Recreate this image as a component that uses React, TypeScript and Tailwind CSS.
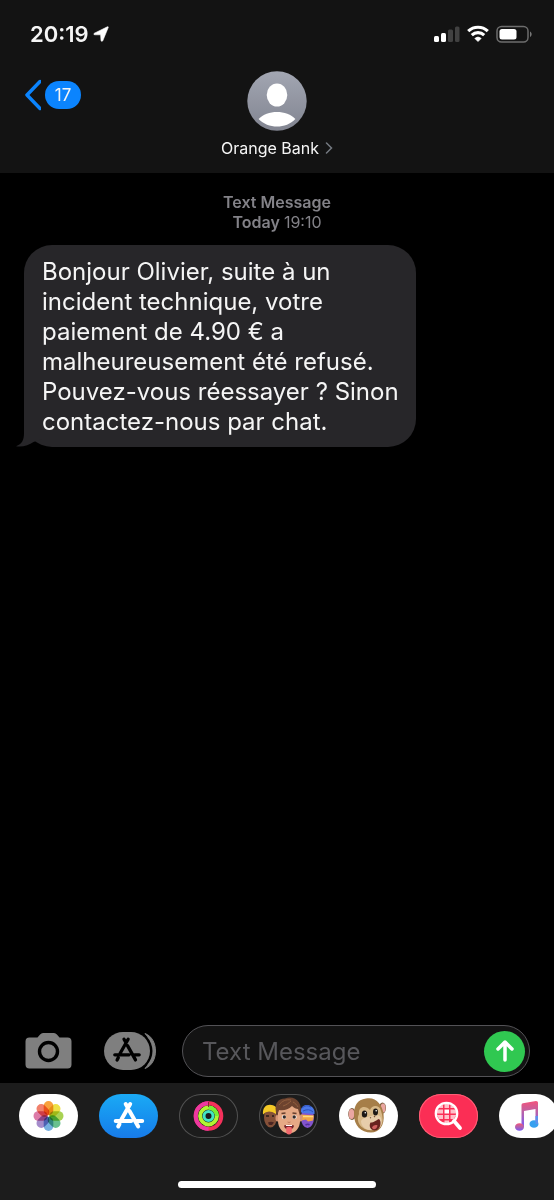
import React from 'react';

function StatusBar() {
  return (
    <div className="flex h-[68px] items-center justify-between pl-[30px] pr-[21px]">
      <div className="flex items-center gap-1">
        <span className="text-[22px] leading-7 font-semibold">20:19</span>
        <svg className="h-4 w-4" viewBox="0 0 16 16" aria-hidden="true">
          <path d="M1.400 7.200 14.400.8c.7-.3 1.100.1.8.8L9.800 14.700c-.5 1-1.700.7-1.800-.3L7.600 8.800 1.900 8.800C.7 8.700.4 7.700 1.400 7.200Z" fill="white" stroke="white" strokeWidth=".6" />
        </svg>
      </div>
      <svg className="h-[18px] w-[100px]" viewBox="0 0 100 18" aria-hidden="true">
        <g fill="white">
          <rect x="1" y="11" width="5" height="6" rx="1.500" />
          <rect x="8" y="8" width="5" height="9" rx="1.500" />
          <g fill="#414141">
            <rect x="15" y="4.500" width="5" height="12.500" rx="1.500" />
            <rect x="22" y="1.500" width="4.500" height="15.500" rx="1.500" />
          </g>
          <path d="M45 16.600 41.800 13.400a4.700 4.700 0 0 1 6.400 0Z" stroke="white" strokeWidth=".6" strokeLinejoin="round" />
        </g>
        <path d="M35.200 6.200a14.200 14.200 0 0 1 19.600 0M38.800 10.100a9 9 0 0 1 12.400 0" fill="none" stroke="white" strokeWidth="3.100" />
        <rect x="64" y="1.500" width="31" height="15.500" rx="4.500" fill="none" stroke="#6d6d6d" strokeWidth="1.500" />
        <rect x="66.500" y="4" width="17" height="10.500" rx="2.500" fill="white" />
        <path d="M97 6.500c2.200 1 2.200 4.500 0 5.500Z" fill="#777" />
      </svg>
    </div>
  );
}

function Avatar() {
  return (
    <svg className="h-[60px] w-[60px]" viewBox="0 0 60 60" aria-hidden="true">
      <defs>
        <linearGradient id="avatar-bg" x1="0" y1="0" x2="0" y2="1">
          <stop stopColor="#a2a6b2" />
          <stop offset="1" stopColor="#828591" />
        </linearGradient>
      </defs>
      <circle cx="30" cy="30" r="29.700" fill="url(#avatar-bg)" />
      <ellipse cx="30" cy="24" rx="10.300" ry="11.500" fill="white" />
      <path d="M11.600 48C20 38.500 40 38.500 48.400 48 39 58 21 58 11.600 48Z" fill="white" />
    </svg>
  );
}

function Header() {
  return (
    <header className="bg-[#131313] pb-[13px]">
      <StatusBar />
      <div className="grid grid-cols-[1fr_auto_1fr] items-start pt-[3px]">
        <button className="mt-2 ml-6 flex w-fit items-center gap-1" aria-label="Back, 17 unread">
          <svg className="h-8 w-[17px]" viewBox="0 0 17 32" aria-hidden="true">
            <path d="M16 2.500 3 16l13 13.500" fill="none" stroke="#0b84fe" strokeWidth="3.500" strokeLinecap="round" strokeLinejoin="round" />
          </svg>
          <span className="flex h-7 w-9 items-center justify-center rounded-full bg-[#0b84fe] text-[17px] leading-6">17</span>
        </button>
        <button className="flex flex-col items-center gap-[5px]">
          <Avatar />
          <span className="flex items-center gap-[6px] text-base leading-6">
            Orange Bank
            <svg className="h-3 w-2" viewBox="0 0 8 12" aria-hidden="true">
              <path d="m1.500 1 5 5-5 5" fill="none" stroke="#747981" strokeWidth="1.500" strokeLinecap="round" />
            </svg>
          </span>
        </button>
      </div>
    </header>
  );
}

function Conversation() {
  return (
    <main className="grow pt-[19px]">
      <p className="text-center text-[16px] leading-5 font-semibold text-[#838288]">
        <span className="block">Text Message</span>
        <span className="block">Today <span className="font-normal">19:10</span></span>
      </p>
      <div className="relative mt-[13px] ml-6 w-[392px] max-w-[90%] rounded-[28px] bg-[#272629] pt-3 pr-4 pb-[10px] pl-[18px] text-2xl leading-[30px]">
        <svg className="absolute bottom-0 -left-2 h-8 w-8" viewBox="0 0 32 32" aria-hidden="true">
          <path d="M8 0v18c0 7-2 11-8 13.300 7 1 13-1.300 17.500-4.300L26 24V0Z" fill="#272629" />
        </svg>
        <p className="relative">
          Bonjour Olivier, suite à un incident technique, votre paiement de 4.90 € a malheureusement été refusé. Pouvez-vous réessayer ? Sinon contactez-nous par chat.
        </p>
      </div>
    </main>
  );
}

function StoreMark() {
  return (
    <g fill="none" strokeLinecap="round">
      <path d="M12.500 3.500 14.200 6.500M17 3.500 8.200 19M16.300 10.500 25 26M2.500 20.500H18M24 20.500H29M6.300 23.500 5 26" />
    </g>
  );
}

function Composer() {
  return (
    <div className="flex items-center pt-3 pr-6 pb-[6px] pl-[25px]">
      <button aria-label="Camera">
        <svg className="h-9 w-[47px]" viewBox="0 0 47 36" aria-hidden="true">
          <path d="M4.500 4.500h8l2.600-3Q16.300 0 18 0h11q1.700 0 2.900 1.500l2.600 3h8Q46.500 4.500 46.500 8.500V31.500Q46.500 35.500 42.500 35.500H4.500Q.5 35.500.5 31.500V8.500Q.5 4.500 4.500 4.500Z" fill="#7f7f7f" />
          <circle cx="23.500" cy="18.500" r="9" fill="#7f7f7f" stroke="black" strokeWidth="3.400" />
        </svg>
      </button>
      <button className="ml-8" aria-label="Apps">
        <svg className="h-[38px] w-[52px]" viewBox="0 0 52 38" aria-hidden="true">
          <path d="M41 1.500c14 5 14 30 0 35 8-8 8-27 0-35Z" fill="#7f7f7f" stroke="#7f7f7f" />
          <rect x="-1.500" y="-1.500" width="50" height="41" rx="20.500" fill="black" />
          <rect width="46" height="38" rx="19" fill="#7f7f7f" />
          <g transform="translate(8.500 4) scale(.92)" stroke="black" strokeWidth="3.600"><StoreMark /></g>
        </svg>
      </button>
      <div className="ml-[26px] flex h-[52px] min-w-0 grow items-center rounded-full border border-[#535256] bg-[#131313] pr-1 pl-[19px]">
        <input className="min-w-0 grow bg-transparent pt-[2px] text-2xl leading-8 text-white outline-none placeholder:text-[#57575b]" aria-label="Text Message" placeholder="Text Message" />
        <button className="flex h-[41px] w-[41px] shrink-0 items-center justify-center rounded-full bg-[#30c851]" aria-label="Send">
          <svg className="h-6 w-5" viewBox="0 0 20 24" aria-hidden="true">
            <path d="M10 21V3M3 10 10 3 17 10" fill="none" stroke="white" strokeWidth="3.500" strokeLinecap="round" strokeLinejoin="round" />
          </svg>
        </button>
      </div>
    </div>
  );
}

const petals = ['#f8a13c', '#eee045', '#a9d253', '#68c08e', '#76afe0', '#a58ccb', '#dc7ba8', '#f1806c'];

function PhotosIcon() {
  return (
    <g style={{ isolation: 'isolate' }}>
      {petals.map((color, i) => (
        <rect key={color} x="24.700" y="7" width="9.600" height="14.200" rx="4.800" fill={color} transform={`rotate(${i * 45} 29.500 22)`} style={{ mixBlendMode: 'multiply' }} />
      ))}
    </g>
  );
}

function AppStoreIcon() {
  return <g transform="translate(14.200 6.500)" stroke="white" strokeWidth="4"><StoreMark /></g>;
}

function ActivityIcon() {
  return (
    <g fill="none" strokeWidth="4">
      <circle cx="29.500" cy="22" r="12.800" stroke="#f5315b" />
      <path d="M29.500 9.200A12.800 12.800 0 0 0 29.500 34.800" stroke="#ed38a0" />
      <circle cx="29.500" cy="22" r="8.400" stroke="#b1f432" />
      <path d="M29.500 13.600A8.400 8.400 0 0 1 37.900 22" stroke="#77ee35" />
      <circle cx="29.500" cy="22" r="4.500" stroke="#42e5c3" strokeWidth="3" />
      <path d="M29.500 8v5" stroke="#8b2638" strokeWidth="1" />
    </g>
  );
}

function MemojiIcon() {
  return (
    <g>
      <ellipse cx="11.500" cy="23.500" rx="6.500" ry="10" fill="#855139" />
      <path d="M4 20.500C3 11 11 8.500 17 13v7Q9 15 4 20.500Z" fill="#f5c927" />
      <path d="M7 22h3m3 0h2" stroke="#281b18" strokeWidth="1.600" />
      <path d="M9 28.500q3-1.500 6 0l-2 2.500h-3Z" fill="#4b2522" />
      <ellipse cx="48.500" cy="23.500" rx="6.500" ry="10.500" fill="#8354cc" />
      <path d="M42 18c-1-9 11-9 13.500-1v3L43 19Z" fill="#4b78e8" />
      <path d="M43 14q4-4 9-1M44 17q6-3 10 1" stroke="#2d50bb" fill="none" />
      <path d="m42 20.500 13 1-1 5-5 1-2-2-5 1Z" fill="#f1a643" />
      <path d="M44 22.500h10" stroke="#ffda80" strokeWidth="1.500" />
      <path d="M46.500 31q2.500-1.500 4 0" stroke="#53309b" strokeWidth="1.500" fill="none" />
      <ellipse cx="18.500" cy="24" rx="2" ry="3.500" fill="#d69576" />
      <ellipse cx="41.500" cy="24" rx="2" ry="3.500" fill="#d69576" />
      <path d="M19 18c0-10 22-10 22 0v9c0 7-5 12.500-11 12.500S19 34 19 27Z" fill="#e6a985" />
      <path d="M18 22C14 10 19 4.500 26 4.500c9-3.500 19 3 15 17.500l-2-7c-2 0-4-1-6-3-4 4-9 5-13 4Z" fill="#6d432f" />
      <path d="M20 11c3-4 7-6 12-5M24 12c3-1 6-3 8-5M34 8c2 1 4 3 5 5" stroke="#93603f" fill="none" />
      <path d="m22.500 19.500 4-.5m7 0 4 .5" stroke="#68412f" strokeWidth="1.400" />
      <ellipse cx="25" cy="23" rx="2.200" ry="2" fill="white" />
      <ellipse cx="35.500" cy="23" rx="2.200" ry="2" fill="white" />
      <circle cx="25.300" cy="23" r="1.700" fill="#362b28" />
      <circle cx="35.200" cy="23" r="1.700" fill="#362b28" />
      <path d="M28.500 28q1.500 1 3 0" stroke="#c47e61" fill="none" />
      <path d="M25 31.500q5-1.500 10 0-.5 4-5 4t-5-4Z" fill="#74242b" />
      <path d="M27 31.500h6" stroke="white" />
      <path d="M27.200 33.500q2.800-1.500 5.600 0v4q0 3-2.800 3t-2.800-3Z" fill="#f1686d" />
    </g>
  );
}

function MonkeyIcon() {
  return (
    <g>
      <ellipse cx="13" cy="20" rx="3.800" ry="6" fill="#7d6040" />
      <ellipse cx="12.500" cy="20" rx="2.800" ry="5" fill="#eaa6a2" />
      <ellipse cx="43.500" cy="14" rx="3.500" ry="5.500" fill="#7d6040" />
      <ellipse cx="44" cy="14" rx="2.500" ry="4.500" fill="#eaa6a2" />
      <path d="M27 4.500c10-2 16 6 17.500 15C46 32 40 38.500 32 38.500c-10 0-17-7-17-18 0-9 3-14.500 12-16Z" fill="#a67e48" />
      <path d="M20 20c-1-8 7-9 11-4 2-6 10-5 11 1 3 9 3 18-9 19-10 1-17-8-13-16Z" fill="#d8b988" />
      <path d="M22 27c2-4 7-4 10-5 4-1 8-2 10 2 2 7-1 12-8 12-6 1-12-3-12-9Z" fill="#e7cdaa" />
      <ellipse cx="25.500" cy="20" rx="2.700" ry="3.600" fill="#1c1815" />
      <ellipse cx="36.500" cy="18" rx="2.500" ry="3.400" fill="#1c1815" />
      <circle cx="26.300" cy="18.700" r=".8" fill="white" />
      <circle cx="37.200" cy="16.700" r=".8" fill="white" />
      <path d="m31 23.500 1 .6m3-1.100 1-1" stroke="#765231" strokeWidth="1.200" />
      <path d="M31.500 28.500c4 0 5-2 8.500-3.500 2.500 2 2 9-2 11-5 2-9-3-6.500-7.500Z" fill="#68221e" />
      <path d="M33 33.500c1.500-2.500 4-3 5.500-2-.5 4-4.500 5-5.500 2Z" fill="#d0605f" />
    </g>
  );
}

function ImagesIcon() {
  return (
    <g>
      <g fill="#ffc0c9">
        <path d="m20 12 4-1v3h-5ZM25.500 10H30v4h-4.500ZM31.500 11q3 1 4 3h-4ZM18 15.500h6v4h-6Zm13.500 0H37v4h-5.500ZM18 21h6v4h-4Zm7.500 0H30v4h-4.500Zm6 0H37l-2 4h-3.500Zm-6 5.500H30V30h-4.500Z" />
      </g>
      <path d="M25.500 15.500H30v4h-4.500Z" fill="white" />
      <circle cx="27.500" cy="19.500" r="10.700" fill="none" stroke="white" strokeWidth="2.300" />
      <path d="m35 27 6 7" stroke="white" strokeWidth="3.800" strokeLinecap="round" />
    </g>
  );
}

function MusicIcon() {
  return (
    <g fill="url(#music-note)">
      <path d="M22.500 11Q22.500 9.600 24 9.300L37 7Q39 7 39 8.500v21h-2.500V15L25 17v16h-2.500Z" />
      <ellipse cx="20.500" cy="33" rx="4.500" ry="3.800" />
      <ellipse cx="35" cy="30" rx="4.500" ry="3.800" fill="#36a0ef" />
      <path d="M36.500 22H39v8h-2.500Z" fill="#5d91ec" />
    </g>
  );
}

const apps = [
  { name: 'Photos', pill: 'bg-white', Icon: PhotosIcon },
  { name: 'App Store', pill: 'bg-linear-to-b from-[#1baaf5] to-[#187be9]', Icon: AppStoreIcon },
  { name: 'Activity', pill: 'bg-[#1c1c1c] ring-1 ring-inset ring-[#515151]', Icon: ActivityIcon },
  { name: 'Memoji', pill: 'bg-[#1c1c1c] ring-1 ring-inset ring-[#515151]', Icon: MemojiIcon },
  { name: 'Animoji', pill: 'bg-white', Icon: MonkeyIcon },
  { name: 'Images', pill: 'bg-[#fb2e55] ring-1 ring-inset ring-[#ff6077]', Icon: ImagesIcon },
  { name: 'Music', pill: 'bg-white', Icon: MusicIcon },
];

function AppDrawer() {
  return (
    <footer className="bg-[#1c1c1c] pt-[11px] pb-3">
      <svg className="absolute h-0 w-0" aria-hidden="true">
        <defs>
          <linearGradient id="music-note" x1="0" y1="0" x2="0" y2="1">
            <stop stopColor="#f3537b" />
            <stop offset=".4" stopColor="#bd62a4" />
            <stop offset="1" stopColor="#7859f5" />
          </linearGradient>
        </defs>
      </svg>
      <nav className="flex gap-[21px] overflow-hidden pl-[19px]" aria-label="Message apps">
        {apps.map(({ name, pill, Icon }) => (
          <button key={name} className={`h-11 w-[59px] shrink-0 rounded-full ${pill}`} aria-label={name}>
            <svg className="h-11 w-[59px]" viewBox="0 0 59 44" aria-hidden="true"><Icon /></svg>
          </button>
        ))}
      </nav>
      <div className="mx-auto mt-[43px] h-[7px] w-[198px] rounded-full bg-white" />
    </footer>
  );
}

export default function App() {
  return (
    <div className="flex min-h-screen flex-col overflow-hidden bg-black font-['Inter',sans-serif] text-[#f5f5f5]">
      <Header />
      <Conversation />
      <Composer />
      <AppDrawer />
    </div>
  );
}
